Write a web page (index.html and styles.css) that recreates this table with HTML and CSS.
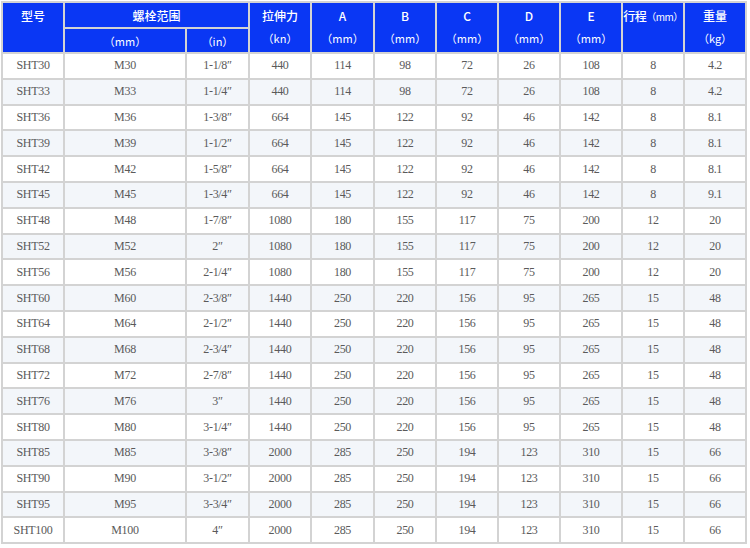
FILE: index.html
```html
<!DOCTYPE html>
<html lang="zh">
<head>
<meta charset="utf-8">
<link rel="stylesheet" href="styles.css">
</head>
<body>
<table class="spec">
  <colgroup>
    <col class="c62"><col class="c122"><col class="c63"><col class="c62"><col class="c63">
    <col class="c62"><col class="c62"><col class="c62"><col class="c62"><col class="c62"><col class="c62">
  </colgroup>
  <thead>
    <tr class="h1">
      <th rowspan="2" class="top">型号</th>
      <th colspan="2">螺栓范围</th>
      <th rowspan="2" class="top">拉伸力<br><span class="unit">（kn）</span></th>
      <th rowspan="2" class="top">A<br><span class="unit">（mm）</span></th>
      <th rowspan="2" class="top">B<br><span class="unit">（mm）</span></th>
      <th rowspan="2" class="top">C<br><span class="unit">（mm）</span></th>
      <th rowspan="2" class="top">D<br><span class="unit">（mm）</span></th>
      <th rowspan="2" class="top">E<br><span class="unit">（mm）</span></th>
      <th rowspan="2" class="top nowrap">行程<span class="unit small">（mm）</span></th>
      <th rowspan="2" class="top">重量<br><span class="unit">（kg）</span></th>
    </tr>
    <tr class="h2">
      <th>（mm）</th>
      <th>（in）</th>
    </tr>
  </thead>
  <tbody>
    <tr><td>SHT30</td><td>M30</td><td>1-1/8″</td><td>440</td><td>114</td><td>98</td><td>72</td><td>26</td><td>108</td><td>8</td><td>4.2</td></tr>
    <tr><td>SHT33</td><td>M33</td><td>1-1/4″</td><td>440</td><td>114</td><td>98</td><td>72</td><td>26</td><td>108</td><td>8</td><td>4.2</td></tr>
    <tr><td>SHT36</td><td>M36</td><td>1-3/8″</td><td>664</td><td>145</td><td>122</td><td>92</td><td>46</td><td>142</td><td>8</td><td>8.1</td></tr>
    <tr><td>SHT39</td><td>M39</td><td>1-1/2″</td><td>664</td><td>145</td><td>122</td><td>92</td><td>46</td><td>142</td><td>8</td><td>8.1</td></tr>
    <tr><td>SHT42</td><td>M42</td><td>1-5/8″</td><td>664</td><td>145</td><td>122</td><td>92</td><td>46</td><td>142</td><td>8</td><td>8.1</td></tr>
    <tr><td>SHT45</td><td>M45</td><td>1-3/4″</td><td>664</td><td>145</td><td>122</td><td>92</td><td>46</td><td>142</td><td>8</td><td>9.1</td></tr>
    <tr><td>SHT48</td><td>M48</td><td>1-7/8″</td><td>1080</td><td>180</td><td>155</td><td>117</td><td>75</td><td>200</td><td>12</td><td>20</td></tr>
    <tr><td>SHT52</td><td>M52</td><td>2″</td><td>1080</td><td>180</td><td>155</td><td>117</td><td>75</td><td>200</td><td>12</td><td>20</td></tr>
    <tr><td>SHT56</td><td>M56</td><td>2-1/4″</td><td>1080</td><td>180</td><td>155</td><td>117</td><td>75</td><td>200</td><td>12</td><td>20</td></tr>
    <tr><td>SHT60</td><td>M60</td><td>2-3/8″</td><td>1440</td><td>250</td><td>220</td><td>156</td><td>95</td><td>265</td><td>15</td><td>48</td></tr>
    <tr><td>SHT64</td><td>M64</td><td>2-1/2″</td><td>1440</td><td>250</td><td>220</td><td>156</td><td>95</td><td>265</td><td>15</td><td>48</td></tr>
    <tr><td>SHT68</td><td>M68</td><td>2-3/4″</td><td>1440</td><td>250</td><td>220</td><td>156</td><td>95</td><td>265</td><td>15</td><td>48</td></tr>
    <tr><td>SHT72</td><td>M72</td><td>2-7/8″</td><td>1440</td><td>250</td><td>220</td><td>156</td><td>95</td><td>265</td><td>15</td><td>48</td></tr>
    <tr><td>SHT76</td><td>M76</td><td>3″</td><td>1440</td><td>250</td><td>220</td><td>156</td><td>95</td><td>265</td><td>15</td><td>48</td></tr>
    <tr><td>SHT80</td><td>M80</td><td>3-1/4″</td><td>1440</td><td>250</td><td>220</td><td>156</td><td>95</td><td>265</td><td>15</td><td>48</td></tr>
    <tr><td>SHT85</td><td>M85</td><td>3-3/8″</td><td>2000</td><td>285</td><td>250</td><td>194</td><td>123</td><td>310</td><td>15</td><td>66</td></tr>
    <tr><td>SHT90</td><td>M90</td><td>3-1/2″</td><td>2000</td><td>285</td><td>250</td><td>194</td><td>123</td><td>310</td><td>15</td><td>66</td></tr>
    <tr><td>SHT95</td><td>M95</td><td>3-3/4″</td><td>2000</td><td>285</td><td>250</td><td>194</td><td>123</td><td>310</td><td>15</td><td>66</td></tr>
    <tr><td>SHT100</td><td>M100</td><td>4″</td><td>2000</td><td>285</td><td>250</td><td>194</td><td>123</td><td>310</td><td>15</td><td>66</td></tr>
  </tbody>
</table>
</body>
</html>
```
FILE: styles.css
```css
html, body {
  margin: 0;
  padding: 0;
  background: #ffffff;
}
body {
  padding: 1px 0 0 1px;
}
.spec {
  border-collapse: collapse;
  table-layout: fixed;
  width: 746px;
  font-family: "Liberation Serif", "Noto Sans CJK SC", serif;
  font-size: 12px;
}
.c62 { width: 62px; }
.c63 { width: 63px; }
.c122 { width: 122px; }
.spec th, .spec td {
  border: 2px solid #d3d3d3;
  text-align: center;
  padding: 0;
}
.spec th {
  background: #0a37f4;
  color: #ffffff;
  font-weight: 500;
  font-family: "Noto Sans CJK SC", "Liberation Serif", sans-serif;
  font-size: 12px;
}
.spec th.top {
  vertical-align: top;
  line-height: 22px;
  padding-top: 2px;
}
.spec th.nowrap {
  white-space: nowrap;
  letter-spacing: -0.5px;
}
.spec .unit {
  font-size: 11px;
  font-weight: normal;
}
.spec .unit.small {
  font-size: 10px;
}
.h1 th { height: 24px; }
.h2 th { height: 23px; font-size: 11px; font-weight: normal; }
.spec td {
  height: 23.8px;
  color: #5a5a5a;
  font-size: 12px;
  letter-spacing: -0.3px;
}
.spec tbody tr:nth-child(even) td {
  background: #f3f6fa;
}
```
